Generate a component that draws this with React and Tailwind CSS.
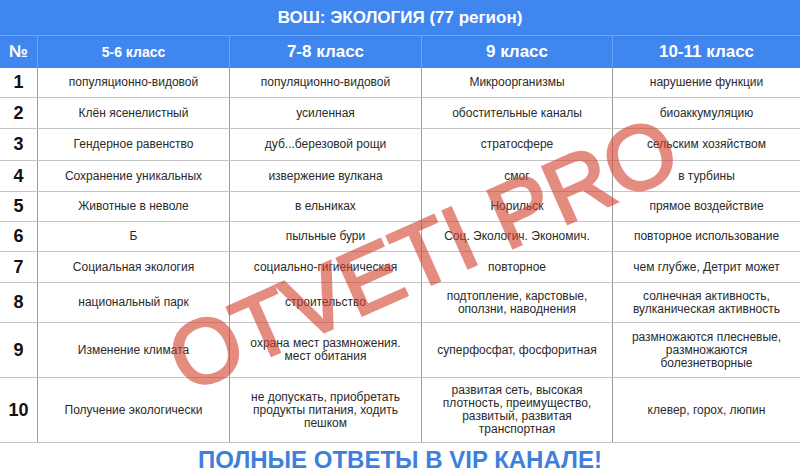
import React from 'react';

const rows = [
  { h: 'h-[30px]', cells: [['популяционно-видовой'], ['популяционно-видовой'], ['Микроорганизмы'], ['нарушение функции']] },
  { h: 'h-[31px]', cells: [['Клён ясенелистный'], ['усиленная'], ['обостительные каналы'], ['биоаккумуляцию']] },
  { h: 'h-[32px]', cells: [['Гендерное равенство'], ['дуб...березовой рощи'], ['стратосфере'], ['сельским хозяйством']] },
  { h: 'h-[31px]', cells: [['Сохранение уникальных'], ['извержение вулкана'], ['смог'], ['в турбины']] },
  { h: 'h-[30px]', cells: [['Животные в неволе'], ['в ельниках'], ['Норильск'], ['прямое воздействие']] },
  { h: 'h-[30px]', cells: [['Б'], ['пыльные бури'], ['Соц. Экологич. Экономич.'], ['повторное использование']] },
  { h: 'h-[31px]', cells: [['Социальная экология'], ['социально-гигиеническая'], ['повторное'], ['чем глубже, Детрит может']] },
  {
    h: 'h-[40px]',
    cells: [
      ['национальный парк'],
      ['строительство'],
      ['подтопление, карстовые,', 'оползни, наводнения'],
      ['солнечная активность,', 'вулканическая активность'],
    ],
  },
  {
    h: 'h-[55px]',
    cells: [
      ['Изменение климата'],
      ['охрана мест размножения.', 'мест обитания'],
      ['суперфосфат, фосфоритная'],
      ['размножаются плесневые,', 'размножаются', 'болезнетворные'],
    ],
  },
  {
    h: 'h-[65px]',
    cells: [
      ['Получение экологически'],
      ['не допускать, приобретать', 'продукты питания, ходить', 'пешком'],
      ['развитая сеть, высокая', 'плотность, преимущество,', 'развитый, развитая', 'транспортная'],
      ['клевер, горох, люпин'],
    ],
  },
];

const cols = 'grid grid-cols-[37px_192px_192px_191px_188px]';

export default function App() {
  return (
    <div className="relative w-[800px] h-[476px] overflow-hidden bg-white font-['Liberation_Sans',Arial,sans-serif]">
      {/* title */}
      <div className="h-[36px] bg-[#3f86ef] border-b border-[#6ea4f3] flex items-center justify-center text-white font-bold text-[17px]">
        ВОШ: ЭКОЛОГИЯ (77 регион)
      </div>

      {/* header */}
      <div className={`${cols} h-[32px] bg-[#3f86ef] text-white font-bold`}>
        <div className="flex items-center justify-center text-[17px]">№</div>
        <div className="flex items-center justify-center border-l border-[#6ea4f3] text-[14px]">5-6 класс</div>
        <div className="flex items-center justify-center border-l border-[#6ea4f3] text-[17px]">7-8 класс</div>
        <div className="flex items-center justify-center border-l border-[#6ea4f3] text-[17px]">9 класс</div>
        <div className="flex items-center justify-center border-l border-[#6ea4f3] text-[17px]">10-11 класс</div>
      </div>

      {/* rows */}
      {rows.map((r, i) => (
        <div key={i} className={`${cols} ${r.h} border-b border-[#c4c4c4]`}>
          <div className="flex items-center justify-center text-[18px] font-bold text-[#111]">{i + 1}</div>
          {r.cells.map((lines, j) => (
            <div
              key={j}
              className="flex flex-col items-center justify-center border-l border-[#9a9a9a] text-[12px] leading-[13px] text-[#2a2a2a] text-center"
            >
              {lines.map((t, k) => (
                <span key={k} className="whitespace-nowrap">{t}</span>
              ))}
            </div>
          ))}
        </div>
      ))}

      {/* footer */}
      <div className="h-[33px] flex items-center justify-center text-[24px] font-bold text-[#3d80dc]">
        ПОЛНЫЕ ОТВЕТЫ В VIP КАНАЛЕ!
      </div>

      {/* watermark */}
      <div className="absolute left-[423px] top-[254px] -translate-x-1/2 -translate-y-1/2 -rotate-[24deg] whitespace-nowrap text-[90px] font-normal leading-none text-[#d4402e] [-webkit-text-stroke:3px_#d4402e] opacity-60 pointer-events-none">
        OTVETI PRO
      </div>
    </div>
  );
}
